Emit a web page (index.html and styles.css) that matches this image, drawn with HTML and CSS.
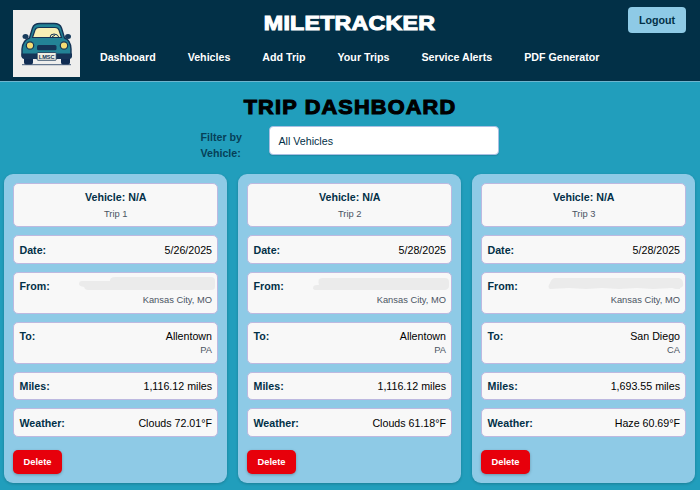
FILE: index.html
```
<!DOCTYPE html>
<html lang="en">
<head>
<meta charset="utf-8">
<title>MileTracker</title>
<link rel="stylesheet" href="styles.css">
</head>
<body>
<header class="top">
  <svg class="logo" viewBox="0 0 67 67" aria-label="Car logo">
    <rect width="67" height="67" fill="#eeeeed"/>
    <path d="M9 54.700H58" stroke="#17345a" stroke-width=".8"/>
    <path d="M11 45h9v7.500q0 2-2 2h-5q-2 0-2-2zM48 45h9v7.500q0 2-2 2h-5q-2 0-2-2z" fill="#102c52"/>
    <ellipse cx="12.500" cy="26.500" rx="3" ry="2.500" fill="#173b5c"/>
    <ellipse cx="55" cy="26.500" rx="3" ry="2.500" fill="#173b5c"/>
    <path d="M16.500 28L19.500 18Q21 13.500 27 13.500H41Q47 13.500 48.500 18L51.500 28Q57.500 30 58 39V45Q58 48 55 48H12Q9 48 9 45V39Q10 30 16.500 28Z" fill="#238396" stroke="#143456" stroke-width="1.400"/>
    <path d="M19.500 27.500L22 20Q23 17.500 26 17.500H42Q45 17.500 46 20L48.500 27.500Z" fill="#f7efb5" stroke="#143456" stroke-width="1.200"/>
    <path d="M37 27.500q0-3.500 4-3.500t5 3.500M39 27l3-2" fill="none" stroke="#143456" stroke-width="1"/>
    <circle cx="17" cy="35.500" r="3.700" fill="#f5dc74" stroke="#143456" stroke-width="1.200"/>
    <circle cx="51" cy="35.500" r="3.700" fill="#f5dc74" stroke="#143456" stroke-width="1.200"/>
    <rect x="24" y="35" width="19.500" height="5.300" rx="1.500" fill="#143456"/>
    <path d="M8.500 43.500H59V46Q59 49 56 49H12Q8.500 49 8.500 46Z" fill="#153457"/>
    <rect x="24.200" y="42.500" width="19" height="7.800" rx=".8" fill="#f0eee2" stroke="#143456" stroke-width=".8"/>
    <text class="plate" x="33.700" y="48.500" text-anchor="middle" textLength="16" lengthAdjust="spacingAndGlyphs">LMSC</text>
  </svg>
  <div class="brand">MILETRACKER</div>
  <button class="logout">Logout</button>
  <nav class="nav">
    <a>Dashboard</a><a>Vehicles</a><a>Add Trip</a><a>Your Trips</a><a>Service Alerts</a><a>PDF Generator</a>
  </nav>
</header>
<main>
  <h1>TRIP DASHBOARD</h1>
  <div class="filter">
    <label>Filter by Vehicle:</label>
    <div class="select">All Vehicles</div>
  </div>
  <div class="cards">
    <section class="card">
      <div class="cell head"><b>Vehicle: N/A</b><small>Trip 1</small></div>
      <div class="cell date"><b>Date:</b><span>5/26/2025</span></div>
      <div class="cell place"><b>From:</b><span class="value"><svg class="smear" viewBox="0 0 137 15"><path d="M3 5H31Q31 1 36 1H132Q136 1 136 5V11Q136 14 132 14H9Q6 14 5 11Q0 10 0 8Q0 5 3 5Z"/></svg><small>Kansas City, MO</small></span></div>
      <div class="cell place"><b>To:</b><span class="value">Allentown<small>PA</small></span></div>
      <div class="cell miles"><b>Miles:</b><span>1,116.12 miles</span></div>
      <div class="cell weather"><b>Weather:</b><span>Clouds 72.01°F</span></div>
      <button class="delete">Delete</button>
    </section>
    <section class="card">
      <div class="cell head"><b>Vehicle: N/A</b><small>Trip 2</small></div>
      <div class="cell date"><b>Date:</b><span>5/28/2025</span></div>
      <div class="cell place"><b>From:</b><span class="value"><svg class="smear" viewBox="0 0 137 15"><path d="M9 2H132Q136 2 136 6V10Q136 13 132 14H3Q0 14 0 12Q0 9 4 9H6Q4 2 9 2Z"/></svg><small>Kansas City, MO</small></span></div>
      <div class="cell place"><b>To:</b><span class="value">Allentown<small>PA</small></span></div>
      <div class="cell miles"><b>Miles:</b><span>1,116.12 miles</span></div>
      <div class="cell weather"><b>Weather:</b><span>Clouds 61.18°F</span></div>
      <button class="delete">Delete</button>
    </section>
    <section class="card">
      <div class="cell head"><b>Vehicle: N/A</b><small>Trip 3</small></div>
      <div class="cell date"><b>Date:</b><span>5/28/2025</span></div>
      <div class="cell place"><b>From:</b><span class="value"><svg class="smear" viewBox="0 0 137 15"><path d="M8 2H132Q136 3 136 7Q137 11 133 12V13H129L125 12L106 13L90 12L72 13L55 12L39 13L22 12L3 13Q0 11 3 7Q5 2 8 2Z"/></svg><small>Kansas City, MO</small></span></div>
      <div class="cell place"><b>To:</b><span class="value">San Diego<small>CA</small></span></div>
      <div class="cell miles"><b>Miles:</b><span>1,693.55 miles</span></div>
      <div class="cell weather"><b>Weather:</b><span>Haze 60.69°F</span></div>
      <button class="delete">Delete</button>
    </section>
  </div>
</main>
</body>
</html>
```
FILE: styles.css
```
* { box-sizing: border-box; }
body {
  margin: 0;
  height: 490px;
  overflow: hidden;
  background: #219ebc;
  color: #000;
  font: 10.67px/16px "Liberation Sans", Arial, sans-serif;
}
.top {
  display: grid;
  grid-template-columns: 67px 1fr 58px;
  grid-template-rows: 32px 1fr;
  column-gap: 20px;
  height: 82px;
  padding: 7px 14px 0 13px;
  background: #023047;
  border-bottom: 1px solid #6fb5cf;
}
.logo { grid-row: 1 / 3; width: 67px; height: 67px; margin-top: 3px; }
.plate { font: bold 6px "Liberation Sans", sans-serif; fill: #143456; }
.brand {
  justify-self: center;
  margin-right: 8px;
  color: #fff;
  font: bold 21px/32px "Liberation Sans", Arial, sans-serif;
  letter-spacing: .2px;
  transform: scaleX(1.105);
  -webkit-text-stroke: 1.1px #fff;
}
.logout {
  height: 26px;
  padding: 0;
  border: 0;
  border-radius: 4px;
  background: #8ecae6;
  color: #023047;
  font: bold 10.67px "Liberation Sans", Arial, sans-serif;
}
.nav {
  grid-column: 2 / 4;
  display: flex;
  gap: 32px;
  padding-top: 10px;
  color: #fff;
  font-weight: bold;
  white-space: nowrap;
}
h1 {
  margin: 0;
  padding-top: 9px;
  height: 44px;
  text-align: center;
  font: bold 20.6px/32px "Liberation Sans", Arial, sans-serif;
  letter-spacing: 1.1px;
  transform: scaleX(1.055);
  -webkit-text-stroke: 1.1px #000;
}
.filter { display: flex; width: 299px; margin: 0 auto; height: 48px; }
.filter label { width: 68px; padding: 3px 20px 0 0; color: #023047; font-weight: bold; opacity: .85; }
.select {
  width: 230px;
  height: 29px;
  padding: 7px 9px;
  line-height: 15px;
  background: #fff;
  border: 1px solid #a9bfe2;
  border-radius: 4px;
  color: #023047;
  box-shadow: 0 1px 1px #0002;
}
.cards { display: grid; grid-template-columns: repeat(3, 223px); gap: 11px; padding-left: 4px; }
.card {
  height: 309px;
  padding: 9px;
  background: #8ecae6;
  border-radius: 9px;
  box-shadow: 0 1px 3px #0003;
}
.cell {
  display: flex;
  justify-content: space-between;
  margin-bottom: 8px;
  padding: 0 5px 0 5.5px;
  border: 1px solid #bdb9e0;
  border-radius: 5px;
  background: #f8f8f8;
}
.cell b { color: #023047; }
.cell small { display: block; color: #4b5563; font-size: 9.33px; line-height: 12px; }
.head { flex-direction: column; justify-content: flex-start; align-items: center; height: 44px; padding-top: 5px; }
.head small { margin-top: 3px; }
.date { height: 29px; align-items: center; }
.place { height: 42px; padding-top: 5px; }
.value { text-align: right; }
.smear { display: block; width: 137px; height: 15px; margin: -2px -4px 3px 0; fill: #ebebeb; }
.miles { height: 28px; align-items: center; }
.weather { height: 29px; align-items: center; }
.delete {
  display: block;
  width: 49px;
  height: 24px;
  margin-top: 13px;
  padding: 0;
  border: 0;
  border-radius: 5px;
  background: #e7000b;
  color: #fff;
  font: bold 9.33px "Liberation Sans", Arial, sans-serif;
  box-shadow: 0 1px 3px #0004;
}
```
